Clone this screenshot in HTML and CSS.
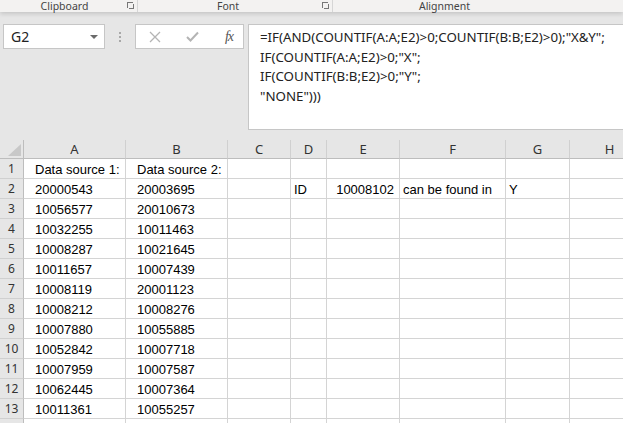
FILE: index.html
```html
<!DOCTYPE html>
<html lang="en">
<head>
    <meta charset="UTF-8">
    <title>Book1 - Excel</title>
    <link rel="stylesheet" href="styles.css">
</head>
<body>
    <!-- Ribbon group labels -->
    <div class="ribbon">
        <div class="group group-clipboard">
            <span class="group-label">Clipboard</span>
            <span class="launcher"></span>
        </div>
        <div class="group group-font">
            <span class="group-label">Font</span>
            <span class="launcher"></span>
        </div>
        <div class="group group-align">
            <span class="group-label">Alignment</span>
        </div>
    </div>

    <!-- Name box + formula bar -->
    <div class="formula-row">
        <div class="name-box">
            <span>G2</span>
            <span class="arrow"></span>
        </div>
        <div class="dots">
            <span></span><span></span><span></span>
        </div>
        <div class="fx-buttons">
            <svg width="12" height="12" viewBox="0 0 12 12"><path d="M1 1 L11 11 M11 1 L1 11" stroke="#b4b4b4" stroke-width="1.3" fill="none"/></svg>
            <svg width="13" height="11" viewBox="0 0 13 11"><path d="M1 6 L4.5 9.5 L12 1.5" stroke="#b4b4b4" stroke-width="2" fill="none"/></svg>
            <span class="fx">fx</span>
        </div>
        <div class="formula">
            <div>=IF(AND(COUNTIF(A:A;E2)&gt;0;COUNTIF(B:B;E2)&gt;0);"X&amp;Y";</div>
            <div>IF(COUNTIF(A:A;E2)&gt;0;"X";</div>
            <div>IF(COUNTIF(B:B;E2)&gt;0;"Y";</div>
            <div>"NONE")))</div>
        </div>
    </div>

    <!-- Worksheet -->
    <table class="sheet">
        <colgroup>
            <col style="width: 24px">
            <col style="width: 102px">
            <col style="width: 102px">
            <col style="width: 63px">
            <col style="width: 36px">
            <col style="width: 73px">
            <col style="width: 106px">
            <col style="width: 64px">
            <col style="width: 80px">
        </colgroup>
        <tr class="col-heads">
            <th class="corner"><span class="tri"></span></th>
            <th>A</th><th>B</th><th>C</th><th>D</th><th>E</th><th>F</th><th>G</th><th>H</th>
        </tr>
        <tr><th>1</th><td class="ind">Data source 1:</td><td class="ind">Data source 2:</td><td></td><td></td><td></td><td></td><td></td><td></td></tr>
        <tr><th>2</th><td class="ind">20000543</td><td class="ind">20003695</td><td></td><td>ID</td><td class="num">10008102</td><td>can be found in</td><td>Y</td><td></td></tr>
        <tr><th>3</th><td class="ind">10056577</td><td class="ind">20010673</td><td></td><td></td><td></td><td></td><td></td><td></td></tr>
        <tr><th>4</th><td class="ind">10032255</td><td class="ind">10011463</td><td></td><td></td><td></td><td></td><td></td><td></td></tr>
        <tr><th>5</th><td class="ind">10008287</td><td class="ind">10021645</td><td></td><td></td><td></td><td></td><td></td><td></td></tr>
        <tr><th>6</th><td class="ind">10011657</td><td class="ind">10007439</td><td></td><td></td><td></td><td></td><td></td><td></td></tr>
        <tr><th>7</th><td class="ind">10008119</td><td class="ind">20001123</td><td></td><td></td><td></td><td></td><td></td><td></td></tr>
        <tr><th>8</th><td class="ind">10008212</td><td class="ind">10008276</td><td></td><td></td><td></td><td></td><td></td><td></td></tr>
        <tr><th>9</th><td class="ind">10007880</td><td class="ind">10055885</td><td></td><td></td><td></td><td></td><td></td><td></td></tr>
        <tr><th>10</th><td class="ind">10052842</td><td class="ind">10007718</td><td></td><td></td><td></td><td></td><td></td><td></td></tr>
        <tr><th>11</th><td class="ind">10007959</td><td class="ind">10007587</td><td></td><td></td><td></td><td></td><td></td><td></td></tr>
        <tr><th>12</th><td class="ind">10062445</td><td class="ind">10007364</td><td></td><td></td><td></td><td></td><td></td><td></td></tr>
        <tr><th>13</th><td class="ind">10011361</td><td class="ind">10055257</td><td></td><td></td><td></td><td></td><td></td><td></td></tr>
        <tr><th></th><td></td><td></td><td></td><td></td><td></td><td></td><td></td><td></td></tr>
    </table>
</body>
</html>
```

FILE: styles.css
```css
/* Global */
body {
    margin: 0;
    background-color: #e6e6e6;
    font-family: "Noto Sans", "Open Sans", sans-serif;
    color: #222;
    overflow: hidden;
    width: 623px;
    height: 423px;
}

/* Ribbon */
.ribbon {
    height: 12px;
    background-color: #f3f2f1;
    display: flex;
    box-shadow: 0 2px 4px rgba(0, 0, 0, 0.14);
    position: relative;
    font-size: 10.5px;
    color: #444;
}

.group {
    display: flex;
    align-items: flex-start;
    justify-content: center;
    position: relative;
    border-right: 1px solid #d6d6d6;
    height: 12px;
}

.group-clipboard { width: 137px; }
.group-font { width: 194px; }
.group-align { width: 223px; border-right: none; }

.group-label {
    line-height: 12px;
}

.group-clipboard .group-label { margin-right: 8px; }
.group-font .group-label { margin-right: 14px; }

.launcher {
    position: absolute;
    right: 4px;
    top: 2px;
    width: 5px;
    height: 5px;
    border-left: 1px solid #777;
    border-top: 1px solid #777;
}

.launcher::after {
    content: "";
    position: absolute;
    left: 1px;
    top: 1px;
    width: 4px;
    height: 4px;
    border-right: 1px solid #777;
    border-bottom: 1px solid #777;
}

/* Formula row */
.formula-row {
    display: flex;
    align-items: flex-start;
    padding: 12px 0 0 3px;
    height: 106px;
    margin-bottom: 10px;
}

.name-box {
    box-sizing: border-box;
    width: 102px;
    height: 25px;
    background: #fff;
    border: 1px solid #c6c6c6;
    display: flex;
    align-items: center;
    justify-content: space-between;
    padding: 0 6px 0 7px;
    font-size: 14px;
    color: #222;
}

.arrow {
    width: 0;
    height: 0;
    border-left: 4px solid transparent;
    border-right: 4px solid transparent;
    border-top: 4px solid #6a6a6a;
}

.dots {
    width: 30px;
    height: 25px;
    display: flex;
    flex-direction: column;
    align-items: center;
    justify-content: center;
    gap: 2px;
}

.dots span {
    width: 2px;
    height: 2px;
    background: #a8a8a8;
}

.fx-buttons {
    width: 109px;
    height: 25px;
    box-sizing: border-box;
    background: #fff;
    border: 1px solid #c6c6c6;
    display: flex;
    align-items: center;
    justify-content: space-between;
    padding: 0 10px 0 13px;
}

.fx {
    font-family: "Liberation Serif", serif;
    font-style: italic;
    font-size: 14px;
    color: #555;
    letter-spacing: -1px;
}

.formula {
    margin-left: 4px;
    flex: 1;
    height: 106px;
    box-sizing: border-box;
    background: #fff;
    border: 1px solid #c6c6c6;
    border-right: none;
    padding: 3px 0 0 11px;
    font-size: 13.3px;
    line-height: 19.7px;
    color: #222;
    white-space: nowrap;
}

/* Worksheet */
.sheet {
    border-collapse: separate;
    border-spacing: 0;
    table-layout: fixed;
    width: 650px;
    font-family: "Liberation Sans", Arial, sans-serif;
    font-size: 13px;
}

.sheet td {
    height: 20px;
    box-sizing: border-box;
    background: #fff;
    border-right: 1px solid #d4d4d4;
    border-bottom: 1px solid #d4d4d4;
    padding: 0 3px 1px;
    vertical-align: bottom;
    white-space: nowrap;
    overflow: hidden;
    color: #000;
}

.sheet td.ind { padding-left: 11px; }
.sheet td.num { text-align: right; padding-right: 5px; }

.sheet th {
    font-family: "Noto Sans", "Open Sans", sans-serif;
    font-weight: normal;
    font-size: 12px;
    color: #333;
    background: #e6e6e6;
    height: 20px;
    box-sizing: border-box;
    border-right: 1px solid #bdbdbd;
    border-bottom: 1px solid #d0d0d0;
    padding: 0;
    text-align: center;
}

.col-heads th {
    height: 19px;
    font-size: 13px;
    border-right: 1px solid #d0d0d0;
    border-bottom: 1px solid #bdbdbd;
    background-image: linear-gradient(#e6e6e6, #e6e6e6);
    background-size: 1px 3px;
    background-repeat: no-repeat;
    background-position: right top;
    position: relative;
}

.col-heads th.corner {
    border-right: 1px solid #bdbdbd;
}

.tri {
    position: absolute;
    right: 2px;
    bottom: 2px;
    width: 0;
    height: 0;
    border-left: 13px solid transparent;
    border-bottom: 12px solid #c8c8c8;
}
```
